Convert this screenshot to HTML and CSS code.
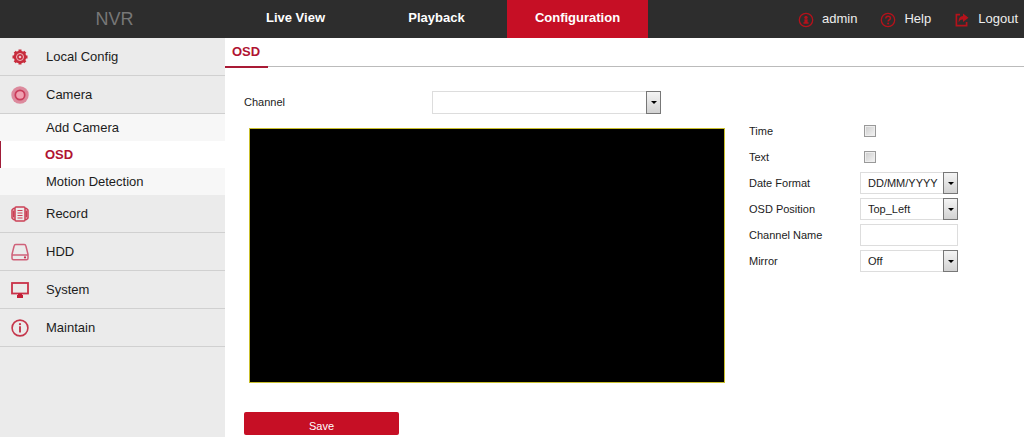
FILE: index.html
```html
<!DOCTYPE html>
<html lang="en">
<head>
<meta charset="utf-8">
<meta name="viewport" content="width=device-width, initial-scale=1">
<title>NVR - Configuration</title>
<link rel="stylesheet" href="styles.css">
</head>
<body>
<header class="topbar">
  <div class="brand">NVR</div>
  <nav class="mainnav" aria-label="Main">
    <a href="#live">Live View</a>
    <a href="#playback">Playback</a>
    <a href="#configuration" class="current" aria-current="page">Configuration</a>
  </nav>
  <div class="account">
    <a href="#admin">
      <svg viewBox="0 0 16 16" aria-hidden="true"><circle cx="8" cy="8" r="6.7" fill="none" stroke="currentColor" stroke-width="1.3"/><circle cx="8" cy="5.4" r="1.7" fill="currentColor"/><path d="M6.4 7.3h3.2v3h1v1.4H5.4v-1.4h1z" fill="currentColor"/></svg>
      <span>admin</span></a>
    <a href="#help">
      <svg viewBox="0 0 16 16" aria-hidden="true"><circle cx="8" cy="8" r="6.7" fill="none" stroke="currentColor" stroke-width="1.3"/><path d="M5.8 6.4c0-3 4.6-2.9 4.6-.2 0 1.6-2.3 1.7-2.3 3.3" fill="none" stroke="currentColor" stroke-width="1.5"/><circle cx="8.1" cy="11.4" r="1" fill="currentColor"/></svg>
      <span>Help</span></a>
    <a href="#logout">
      <svg viewBox="0 0 16 16" aria-hidden="true"><path d="M6 2.7H2.400v11h10.200V10" fill="none" stroke="currentColor" stroke-width="1.7"/><path d="M9 1.500l5.500 4.200L9 9.900V7.600C7 7.400 5.600 8.400 4.700 10.500 4.300 6.500 6 4 9 3.900z" fill="currentColor"/></svg>
      <span>Logout</span></a>
  </div>
</header>
<div class="layout">
  <nav class="sidebar" aria-label="Configuration">
    <a class="item" href="#local">
      <svg viewBox="0 0 18 18" aria-hidden="true"><g fill="#c72c3c"><circle cx="9" cy="9" r="6.3"/><path d="M7.500 1.500h3v15h-3zM1.500 7.500h15v3h-15z"/><path d="M7.500 1.500h3v15h-3zM1.500 7.500h15v3h-15z" transform="rotate(45 9 9)"/></g><circle cx="9" cy="9" r="3.500" fill="none" stroke="#f0b8c0" stroke-width="1"/><circle cx="9" cy="9" r="1.300" fill="#f3c4cb"/></svg>
      <span>Local Config</span></a>
    <a class="item" href="#camera">
      <svg viewBox="0 0 18 18" aria-hidden="true"><circle cx="9" cy="9" r="8.700" fill="#dc8a9d"/><circle cx="9" cy="9" r="4.700" fill="#f0a0b0" stroke="#c93b59" stroke-width="1.700"/></svg>
      <span>Camera</span></a>
    <div class="submenu">
      <a href="#add">Add Camera</a>
      <a href="#osd" class="active" aria-current="page">OSD</a>
      <a href="#motion">Motion Detection</a>
    </div>
    <a class="item" href="#record">
      <svg viewBox="0 0 18 18" aria-hidden="true"><g fill="none" stroke="#cb4056" stroke-width="1.500"><rect x="4" y="2" width="10" height="14" rx="1"/><path d="M4 3.500H2.500L1 5v8l1.500 1.500H4M14 3.500h1.500L17 5v8l-1.500 1.500H14M2.700 5.500v7M15.300 5.500v7"/><path d="M6.500 5.500h5M6.500 8h5M6.500 10.500h5M6.500 13h5" stroke-width="1.100"/></g></svg>
      <span>Record</span></a>
    <a class="item" href="#hdd">
      <svg viewBox="0 0 18 18" aria-hidden="true"><g fill="none" stroke="#cf6179" stroke-width="1.500"><path d="M4.800 1.500h8.400q1.400 0 1.700 1.500L17 11.300v4q0 1.500-1.500 1.500h-13Q1 16.800 1 15.300v-4L3.100 3q.3-1.500 1.700-1.500zM1 12h16"/></g><circle cx="14" cy="14.400" r="1.100" fill="#c63652"/></svg>
      <span>HDD</span></a>
    <a class="item" href="#system">
      <svg viewBox="0 0 18 18" aria-hidden="true"><rect x="1" y="2" width="16" height="10.500" fill="none" stroke="#c93249" stroke-width="1.800"/><path d="M7 12.500h4v1.500h1v3H6v-3h1z" fill="#c51d36"/></svg>
      <span>System</span></a>
    <a class="item" href="#maintain">
      <svg viewBox="0 0 18 18" aria-hidden="true"><circle cx="9" cy="9" r="7.900" fill="none" stroke="#c5364b" stroke-width="1.600"/><circle cx="9" cy="5.200" r="1.100" fill="#c5364b"/><path d="M9 7.300v6.200" stroke="#c5364b" stroke-width="1.900"/></svg>
      <span>Maintain</span></a>
  </nav>
  <main class="content">
    <div class="tabs"><a class="tab" href="#osd">OSD</a></div>
    <form class="form">
      <div class="channel">
        <label for="channel">Channel</label>
        <span class="select select-wide"><select id="channel"><option></option></select></span>
      </div>
      <div class="workspace">
        <div class="preview" role="img" aria-label="Video preview"></div>
        <div class="settings">
          <label for="time">Time</label>
          <input class="check" type="checkbox" id="time">
          <label for="text">Text</label>
          <input class="check" type="checkbox" id="text">
          <label for="format">Date Format</label>
          <span class="select"><select id="format"><option>DD/MM/YYYY</option></select></span>
          <label for="position">OSD Position</label>
          <span class="select"><select id="position"><option>Top_Left</option></select></span>
          <label for="name">Channel Name</label>
          <input class="textbox" type="text" id="name">
          <label for="mirror">Mirror</label>
          <span class="select"><select id="mirror"><option>Off</option></select></span>
        </div>
      </div>
      <button class="save" type="button">Save</button>
    </form>
  </main>
</div>
</body>
</html>
```
FILE: styles.css
```css
*,
*::before {
  box-sizing: border-box;
}

body {
  display: flex;
  flex-direction: column;
  min-height: 100vh;
  margin: 0;
  background: #fff;
  color: #1c1c1c;
  font: 13px/18px "Liberation Sans", Arial, sans-serif;
}

a {
  color: inherit;
  text-decoration: none;
}

svg {
  display: block;
  flex: none;
}

.topbar {
  display: flex;
  height: 38px;
  background: #2d2d2d;
  color: #fff;
}

.brand {
  width: 225px;
  padding-left: 4px;
  color: #777;
  font-size: 18px;
  line-height: 38px;
  text-align: center;
}

.mainnav {
  display: flex;
}

.mainnav a {
  width: 141px;
  font-weight: bold;
  line-height: 36px;
  text-align: center;
}

.mainnav .current {
  background: #c60f25;
}

.account {
  display: flex;
  gap: 23px;
  margin-left: auto;
  padding-right: 6px;
}

.account a {
  display: flex;
  align-items: center;
  gap: 8px;
  color: #eee;
}

.account svg {
  width: 16px;
  height: 16px;
  margin-top: 2px;
  color: #b5121b;
}

.layout {
  display: flex;
  flex: 1;
}

.sidebar {
  flex: none;
  width: 225px;
  background: #ebebeb;
}

.item {
  display: flex;
  align-items: center;
  gap: 17px;
  height: 38px;
  padding-left: 11px;
  border-bottom: 1px solid #d0d0d0;
}

.item svg {
  width: 18px;
  height: 18px;
}

.submenu {
  background: #f7f7f7;
}

.submenu a {
  display: block;
  padding-left: 46px;
  line-height: 27px;
}

.submenu .active {
  padding-left: 44px;
  border-left: 1px solid #a01c38;
  background: #fff;
  color: #b01432;
  font-weight: bold;
}

.content {
  flex: 1;
  min-width: 0;
}

.tabs {
  display: flex;
  height: 30px;
  box-shadow: inset 0 -1px #fff, inset 0 -2px #bbb;
}

.tab {
  padding: 5px 8px 0 7px;
  border-bottom: 2px solid #a91a35;
  color: #b01432;
  font-weight: bold;
}

.form {
  padding: 23px 66px 2px 19px;
  font-size: 11px;
}

.channel {
  display: grid;
  grid-template-columns: 188px 229px;
  align-items: center;
  margin-bottom: 6px;
}

.channel label {
  padding-bottom: 2px;
}

.workspace {
  display: grid;
  grid-template-columns: minmax(0, 1fr) 209px;
  gap: 24px;
  align-items: start;
}

.preview {
  aspect-ratio: 476 / 255;
  margin: 8px 0 0 5px;
  border: 1px solid #c9bf2c;
  background: #000;
}

.settings {
  display: grid;
  grid-template-columns: 111px 98px;
  grid-auto-rows: 22px;
  row-gap: 4px;
  align-items: center;
}

.select {
  position: relative;
  display: block;
}

.select select,
.textbox {
  display: block;
  width: 100%;
  height: 22px;
  margin: 0;
  padding: 0 16px 0 7px;
  border: 1px solid #ddd;
  border-radius: 0;
  background: #fff;
  color: #1c1c1c;
  font: inherit;
  appearance: none;
}

.select::before {
  content: "";
  position: absolute;
  top: 0;
  right: 0;
  bottom: 0;
  width: 15px;
  border: 1px solid #777;
  background: linear-gradient(#f4f4f4, #d2d2d2);
  pointer-events: none;
}

.select::after {
  content: "";
  position: absolute;
  top: 10px;
  right: 4px;
  border: solid transparent;
  border-width: 3px 3px 0;
  border-top-color: #000;
  pointer-events: none;
}

.select-wide select {
  height: 23px;
}

.check {
  width: 12px;
  height: 12px;
  margin: 0 0 0 4px;
  border: 1px solid #999;
  background: linear-gradient(135deg, #ccc, #f4f4f4);
  box-shadow: inset 0 0 0 1px #eee;
  appearance: none;
}

.check:checked {
  background: #c60f25;
}

.save {
  display: block;
  width: 155px;
  height: 23px;
  margin: 29px 0 0;
  padding: 4px 0 0;
  border: 0;
  border-radius: 2px;
  background: #c60f25;
  color: #fff;
  font: inherit;
}
```
